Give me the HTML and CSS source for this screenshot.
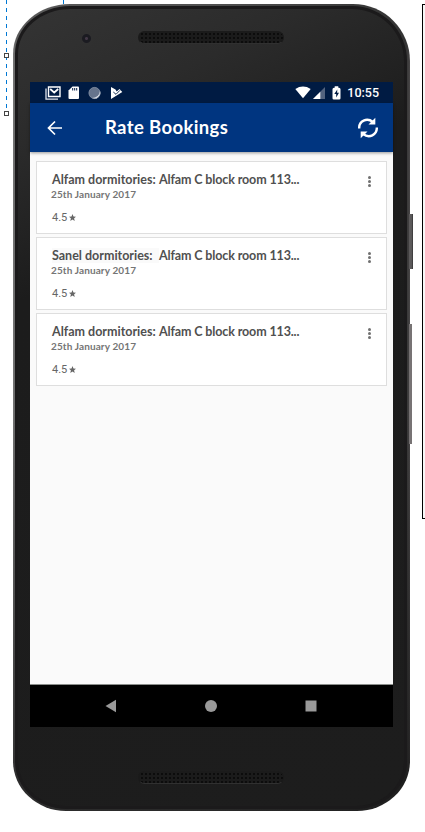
FILE: index.html
```html
<!DOCTYPE html>
<html lang="en">
<head>
<meta charset="utf-8">
<title>Rate Bookings</title>
<link rel="stylesheet" href="styles.css">
</head>
<body>
<div class="guide guide-main"></div>
<div class="guide guide-top"></div>
<div class="handle handle-mid"></div>
<div class="handle handle-end"></div>
<div class="side-box"></div>
<div class="phone">
  <div class="key power"></div>
  <div class="key volume"></div>
  <div class="face">
    <div class="bezel top"><div class="camera"></div><div class="speaker"></div></div>
    <main class="screen">
      <div class="status">
        <svg width="16" height="14" viewBox="0 0 16 14"><path d="M1 2.500v10.700h12" fill="none" stroke="#dfe4ec" stroke-width="1.300"/><path d="M3.500 1h11.500v9.500H3.500z" fill="none" stroke="#fff" stroke-width="1.400"/><path d="M5.200 3l4 3.500 4-3.500" fill="none" stroke="#fff" stroke-width="1.700"/></svg>
        <svg class="sd" width="12" height="14" viewBox="0 0 12 14"><path d="M4.500.5H10q1 0 1 1V12q0 1-1 1H1.500q-1 0-1-1V4.500z" fill="#fff"/><path d="M4.700 2v2.500M6.700 2v2.500M8.700 2v2.500" stroke="#001b43"/></svg>
        <svg class="sync" width="13" height="14" viewBox="0 0 13 14"><circle cx="6.500" cy="7" r="5.700" fill="#66748c"/><path d="M12 5a5.700 5.700 0 0 1-8 7q7 0 8-7z" fill="#e6e9ee"/><circle cx="6.500" cy="7" r="5.600" fill="none" stroke="#8c98aa" stroke-width=".7"/></svg>
        <svg class="play" width="13" height="14" viewBox="0 0 13 14"><path d="M1 1l4.500 2.600 1.200 2 2.800-2.600L12.300 6 1 13z" fill="#fff"/><path d="M3.300 6l2.700 2.300 4-4" fill="none" stroke="#001b43" stroke-width=".9"/></svg>
        <svg class="wifi" width="16" height="13" viewBox="0 0 16 13"><path d="M.3 3Q8-1.800 15.700 3L8 12.300z" fill="#fff"/></svg>
        <svg class="cell" width="12" height="12" viewBox="0 0 12 12"><path d="M0 12L12 0v12z" fill="#53637e"/><path d="M0 12l7.300-7.300V12z" fill="#fff"/></svg>
        <svg class="battery" width="9" height="14" viewBox="0 0 9 14"><path d="M2.700.3h3.600v1.400H7q1.500 0 1.500 1.500v9q0 1.300-1.300 1.300H1.800Q.5 13.500.5 12.200v-9q0-1.500 1.500-1.500h.7z" fill="#fff"/><path d="M5.300 3.500L2.300 8h1.900v3.500L7 6.800H5.100z" fill="#001b43"/></svg>
        <span class="clock">10:55</span>
      </div>
      <header class="appbar">
        <svg class="back" width="16" height="16" viewBox="0 0 16 16"><path d="M15 8H2M8 1.500L1.500 8 8 14.500" fill="none" stroke="#fff" stroke-width="1.700"/></svg>
        <h1>Rate Bookings</h1>
        <svg class="refresh" width="20" height="22" viewBox="0 0 20 22"><g id="arc"><path d="M1.200 11.500C.8 4 9 .3 14.800 5" fill="none" stroke="#fff" stroke-width="2.400"/><path d="M17.300 .8V7.600H10.500z" fill="#fff"/></g><use href="#arc" transform="rotate(180 10 11)"/></svg>
      </header>
      <div class="list">
        <article class="card"><h2><span class="place">Alfam dormitories:</span><span>Alfam C block room 113...</span></h2><p class="date">25th January 2017</p><p class="rating">4.5<svg width="7" height="7" viewBox="0 0 10 10"><path d="M5 0l1.400 3.400L10 3.800 7.300 6.200 8.100 10 5 8 1.900 10l.8-3.800L0 3.800l3.600-.4z"/></svg></p><div class="more"><i></i><i></i><i></i></div></article>
        <article class="card"><h2><span class="place patch">Sanel dormitories:</span><span>Alfam C block room 113...</span></h2><p class="date">25th January 2017</p><p class="rating">4.5<svg width="7" height="7" viewBox="0 0 10 10"><path d="M5 0l1.400 3.400L10 3.800 7.300 6.200 8.100 10 5 8 1.900 10l.8-3.800L0 3.800l3.600-.4z"/></svg></p><div class="more"><i></i><i></i><i></i></div></article>
        <article class="card"><h2><span class="place">Alfam dormitories:</span><span>Alfam C block room 113...</span></h2><p class="date">25th January 2017</p><p class="rating">4.5<svg width="7" height="7" viewBox="0 0 10 10"><path d="M5 0l1.400 3.400L10 3.800 7.300 6.200 8.100 10 5 8 1.900 10l.8-3.800L0 3.800l3.600-.4z"/></svg></p><div class="more"><i></i><i></i><i></i></div></article>
      </div>
      <nav class="nav">
        <svg width="12" height="14" viewBox="0 0 12 14"><path d="M.5 7L11 .7v12.600z" fill="#999"/></svg>
        <svg width="14" height="14" viewBox="0 0 14 14"><circle cx="7" cy="7" r="6" fill="#999"/></svg>
        <svg width="12" height="12" viewBox="0 0 12 12"><path d="M.5.5h11v11H.5z" fill="#999"/></svg>
      </nav>
    </main>
    <div class="bezel bottom"><div class="speaker"></div></div>
  </div>
</div>
</body>
</html>
```
FILE: styles.css
```css
* { box-sizing: border-box; }
body { margin: 0; width: 425px; height: 832px; padding: 4px 0 0 13px; overflow: hidden; background: #fff; font-family: Lato, sans-serif; position: relative; }
h1, h2, p { margin: 0; font-size: inherit; white-space: nowrap; }
svg { display: block; flex: none; }

.guide { position: absolute; width: 1px; top: 0; background: repeating-linear-gradient(#0078d4 0 4px, transparent 4px 8px); }
.guide-main { left: 6px; height: 113px; }
.guide-top { left: 63px; height: 4px; }
.handle { position: absolute; left: 4px; width: 5px; height: 5px; border: 1px solid #444; background: #fff; }
.handle-mid { top: 53px; }
.handle-end { top: 111px; }
.side-box { position: absolute; left: 422px; top: 4px; width: 20px; height: 515px; border: 1px solid #000; background: #f8f8f8; }

.phone { position: relative; width: 397px; height: 807px; padding: 2px 3px 2px 2px; border-radius: 57px 57px 53px 53px / 50px 57px 50px 50px; background: linear-gradient(transparent 50%, rgba(20, 20, 20, .65) 95%), linear-gradient(90deg, #777 0, #5a5a5a 4px, #505050 50%, #333 393px, #484647 397px); }
.key { position: absolute; left: 396px; background: linear-gradient(90deg, #5c5a5b 60%, #333); }
.power { top: 210px; width: 4px; height: 55px; }
.volume { top: 320px; width: 3px; height: 120px; background: #777374; }
.face { height: 803px; padding: 0 12px; border: 3px solid #1b1a1b; border-radius: 55px 55px 51px 51px / 48px 55px 48px 48px; background: linear-gradient(155deg, #343434 0, #2b2b2b 14%, #1c1c1c 30%, #1d1d1d); position: relative; z-index: 1; }

.bezel { position: relative; display: flex; }
.top { height: 73px; align-items: flex-start; padding: 22px 0 0 48px; }
.camera { width: 15px; height: 15px; border-radius: 50%; margin-left: 1px; background: radial-gradient(circle, #423846 0 1px, #1b1b21 2px 4px, #303030 5px 7px); }
.speaker { width: 146px; height: 13px; border-radius: 7px; border: 1px solid #1b1b1b; border-bottom-color: #303030; background: radial-gradient(circle, #0c0c0c 0 .8px, transparent 1.300px) 1px 0 / 4px 4px, #1b1b1b; }
.top .speaker { margin-left: 44px; }
.bottom { padding: 44px 0 0 108px; }

.screen { width: 363px; height: 645px; display: flex; flex-direction: column; background: #fafafa; }
.status { height: 21px; display: flex; align-items: center; padding: 0 14px 0 15px; background: #001b43; flex: none; }
.sd { margin-left: 7px; }
.sync { margin-left: 8px; }
.play { margin-left: 9px; }
.wifi { margin-left: auto; }
.cell { margin-left: 2px; }
.battery { margin-left: 7px; }
.clock { margin-left: 6px; font: 500 12.500px/21px Roboto, sans-serif; color: #fff; }
.appbar { height: 49px; display: flex; align-items: center; padding: 0 15px 0 17px; background: #003580; color: #fff; box-shadow: 0 1px 3px rgba(0, 0, 0, .4); flex: none; }
.appbar h1 { margin-left: 42px; padding-bottom: 1px; font-size: 18.500px; line-height: 24px; font-weight: 700; letter-spacing: .37px; }
.refresh { margin-left: auto; }
.list { flex: 1; padding: 9px 6px 0; display: flex; flex-direction: column; gap: 3px; border-bottom: 1px solid #8b8e8b; }
.card { position: relative; height: 73px; padding: 10px 0 0 15px; background: #fff; border: 1px solid #dedede; }
.card h2 { font-size: 12.500px; line-height: 15px; font-weight: 700; letter-spacing: -.13px; color: #505050; display: flex; }
.place { width: 107px; letter-spacing: 0; }
.patch { background: #fafafa; }
.date { font-size: 10px; line-height: 14px; font-weight: 700; letter-spacing: .12px; color: #757575; margin-left: -1px; }
.rating { display: flex; align-items: center; gap: 2px; margin-top: 10px; font: 11px/14px Roboto, sans-serif; color: #666; }
.rating svg { fill: #666; margin-top: -2px; }
.more { position: absolute; top: 14px; right: 15px; display: grid; gap: 1px; }
.more i { width: 3px; height: 3px; border-radius: 50%; background: #707070; }
.nav { height: 42px; display: flex; align-items: center; justify-content: space-between; padding: 0 76px 1px 75px; background: #000; flex: none; }
```
